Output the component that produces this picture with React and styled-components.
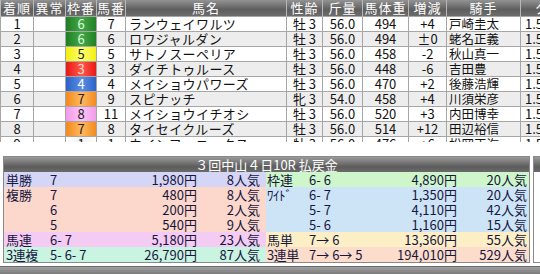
import React from "react";
import styled, { createGlobalStyle } from "styled-components";

const GlobalStyle = createGlobalStyle`
  body {
    margin: 0;
    background: #fff;
    font-family: "Noto Sans CJK JP", "Noto Sans", sans-serif;
  }
`;

const Page = styled.div`
  width: 540px;
  height: 274px;
  overflow: hidden;
  display: flex;
  flex-direction: column;
`;

const TableWrap = styled.div`
  height: 142px;
  overflow: hidden;
  flex-shrink: 0;
`;

const Table = styled.table`
  border-collapse: collapse;
  table-layout: fixed;
  width: 590px;
  font-size: 13px;
  color: #111;
  border-left: 1px solid #6c6c6c;
`;

const Th = styled.th`
  height: 16px;
  padding: 0;
  font-weight: normal;
  font-size: 13px;
  color: #fff;
  background: linear-gradient(#929292, #5e5e5e 60%, #6c6c6c);
  border-left: 1px solid #b8b8b8;
  text-align: center;
  line-height: 16px;
  letter-spacing: 1px;
  white-space: nowrap;
`;

const Tr = styled.tr`
  background: ${({ $shade }) => ($shade ? "#ededed" : "#fff")};
`;

const Td = styled.td`
  height: 14px;
  padding: 0 0 0 ${({ $pad }) => $pad || 0}px;
  border: 1px solid #a6a6a6;
  text-align: ${({ $align }) => $align || "center"};
  line-height: 14px;
  font-size: ${({ $size }) => $size || 13}px;
  letter-spacing: ${({ $ls }) => $ls || 0}px;
  white-space: nowrap;
`;

const FRAMES = {
  1: ["#ffffff", "#f0f0f0", "#111"],
  2: ["#202020", "#505050", "#fff"],
  3: ["#e81818", "#ff5a4a", "#ffd8d8"],
  4: ["#2d62c4", "#5a8ee6", "#fff"],
  5: ["#f2ee10", "#ffff70", "#222"],
  6: ["#1f7f24", "#46a84a", "#d8ffd8"],
  7: ["#f28a1c", "#ffb860", "#222"],
  8: ["#f29ae8", "#ffc4f8", "#222"],
};

const FrameTd = styled(Td)`
  background: ${({ $f }) =>
    `linear-gradient(to right, ${FRAMES[$f][0]}, ${FRAMES[$f][1]} 50%, ${FRAMES[$f][0]})`};
  color: ${({ $f }) => FRAMES[$f][2]};
`;

const PayArea = styled.div`
  margin-top: 14px;
  display: flex;
  gap: 3px;
  padding-left: 3px;
  flex-shrink: 0;
`;

const Panel = styled.div`
  width: 525px;
  border: 1px solid #8a8a8a;
  flex-shrink: 0;
`;

const PanelHead = styled.div`
  height: 15px;
  line-height: 15px;
  background: linear-gradient(#9a9a9a, #5c5c5c 65%, #6a6a6a);
  color: #fff;
  font-size: 13px;
  text-align: center;
  white-space: nowrap;
`;

const PayBody = styled.div`
  display: flex;
`;

const Half = styled.div`
  width: ${({ $w }) => $w}px;
  display: flex;
  flex-direction: column;
`;

const COLS = {
  left: "44px 60px 87px 63px",
  right: "42px 70px 78px 70px",
};

const PayRow = styled.div`
  display: grid;
  grid-template-columns: ${({ $side }) => COLS[$side]};
  padding: ${({ $side }) => ($side === "left" ? "0 6px 0 2px" : "0 2px 0 1px")};
  height: 15px;
  line-height: 15px;
  background: ${({ $bg }) => $bg};
  color: #17173e;
  font-size: 13px;
  white-space: nowrap;
`;

const Cell = styled.span`
  text-align: ${({ $right }) => ($right ? "right" : "left")};
`;

const Label = styled(Cell)`
  letter-spacing: ${({ $tight }) => ($tight ? "-0.5px" : "0")};
`;

const SidePanel = styled.div`
  flex: 1;
  border: 1px solid #8a8a8a;
  border-right: none;
  background: #fff;
`;

const NextBar = styled.div`
  margin-top: 3px;
  height: 20px;
  flex-shrink: 0;
  border-top: 1px solid #6a6a6a;
  background: linear-gradient(#a0a0a0, #6a6a6a 50%, #5c5c5c);
`;

const columns = [
  ["着順", 33],
  ["異常", 32],
  ["枠番", 31],
  ["馬番", 29],
  ["馬名", 161],
  ["性齢", 36],
  ["斤量", 40],
  ["馬体重", 46],
  ["増減", 38],
  ["騎手", 74],
  ["タイム", 70],
];

const horses = [
  [1, 6, 7, "ランウェイワルツ", "牡 3", "56.0", 494, "+4", "戸崎圭太"],
  [2, 6, 6, "ロワジャルダン", "牡 3", "56.0", 494, "±0", "蛯名正義"],
  [3, 5, 5, "サトノスーペリア", "牡 3", "56.0", 458, "-2", "秋山真一"],
  [4, 3, 3, "ダイチトゥルース", "牡 3", "56.0", 448, "-6", "吉田豊"],
  [5, 4, 4, "メイショウパワーズ", "牡 3", "56.0", 470, "+2", "後藤浩輝"],
  [6, 7, 9, "スピナッチ", "牝 3", "54.0", 458, "+4", "川須栄彦"],
  [7, 8, 11, "メイショウイチオシ", "牡 3", "56.0", 520, "+3", "内田博幸"],
  [8, 7, 8, "タイセイクルーズ", "牡 3", "56.0", 514, "+12", "田辺裕信"],
  [9, 1, 1, "ウインフェニックス", "牡 3", "56.0", 476, "+6", "松岡正海"],
];

const leftPays = [
  ["単勝", "7", "1,980円", "8人気", "#d5d5f6"],
  ["複勝", "7", "480円", "8人気", "#fcd7cc"],
  ["", "6", "200円", "2人気", "#fcd7cc"],
  ["", "5", "540円", "9人気", "#fcd7cc"],
  ["馬連", "6- 7", "5,180円", "23人気", "#f4cbf2"],
  ["3連複", "5- 6- 7", "26,790円", "87人気", "#c9f4e2"],
];

const rightPays = [
  ["枠連", "6- 6", "4,890円", "20人気", "#cff6ca"],
  ["ﾜｲﾄﾞ", "6- 7", "1,350円", "20人気", "#cde4f6"],
  ["", "5- 7", "4,110円", "42人気", "#cde4f6"],
  ["", "5- 6", "1,160円", "15人気", "#cde4f6"],
  ["馬単", "7→ 6", "13,360円", "55人気", "#fcefc6"],
  ["3連単", "7→ 6→ 5", "194,010円", "529人気", "#fcdccb"],
];

const PayRows = ({ side, rows }) =>
  rows.map(([label, combo, amount, pop, bg], i) => (
    <PayRow key={i} $side={side} $bg={bg}>
      <Label $tight={label.length > 2}>{label}</Label>
      <Cell>{combo}</Cell>
      <Cell $right>{amount}</Cell>
      <Cell $right>{pop}</Cell>
    </PayRow>
  ));

const App = () => {
  return (
    <Page>
      <GlobalStyle />
      <TableWrap>
        <Table>
          <colgroup>
            {columns.map(([name, w]) => (
              <col key={name} style={{ width: w }} />
            ))}
          </colgroup>
          <thead>
            <tr>
              {columns.map(([name]) => (
                <Th key={name}>{name}</Th>
              ))}
            </tr>
          </thead>
          <tbody>
            {horses.map((h, i) => (
              <Tr key={h[0]} $shade={i % 2 === 1}>
                <Td>{h[0]}</Td>
                <Td />
                <FrameTd $f={h[1]}>{h[1]}</FrameTd>
                <Td>{h[2]}</Td>
                <Td $align="left" $pad={3} $ls={0.4}>
                  {h[3]}
                </Td>
                <Td>{h[4]}</Td>
                <Td>{h[5]}</Td>
                <Td>{h[6]}</Td>
                <Td>{h[7]}</Td>
                <Td $align="left" $pad={2} $size={12.5}>
                  {h[8]}
                </Td>
                <Td $align="left" $pad={4}>
                  1.50.{h[0] + 1}
                </Td>
              </Tr>
            ))}
          </tbody>
        </Table>
      </TableWrap>
      <PayArea>
        <Panel>
          <PanelHead>３回中山４日10R 払戻金</PanelHead>
          <PayBody>
            <Half $w={262}>
              <PayRows side="left" rows={leftPays} />
            </Half>
            <Half $w={263}>
              <PayRows side="right" rows={rightPays} />
            </Half>
          </PayBody>
        </Panel>
        <SidePanel>
          <PanelHead />
        </SidePanel>
      </PayArea>
      <NextBar />
    </Page>
  );
};

export default App;
